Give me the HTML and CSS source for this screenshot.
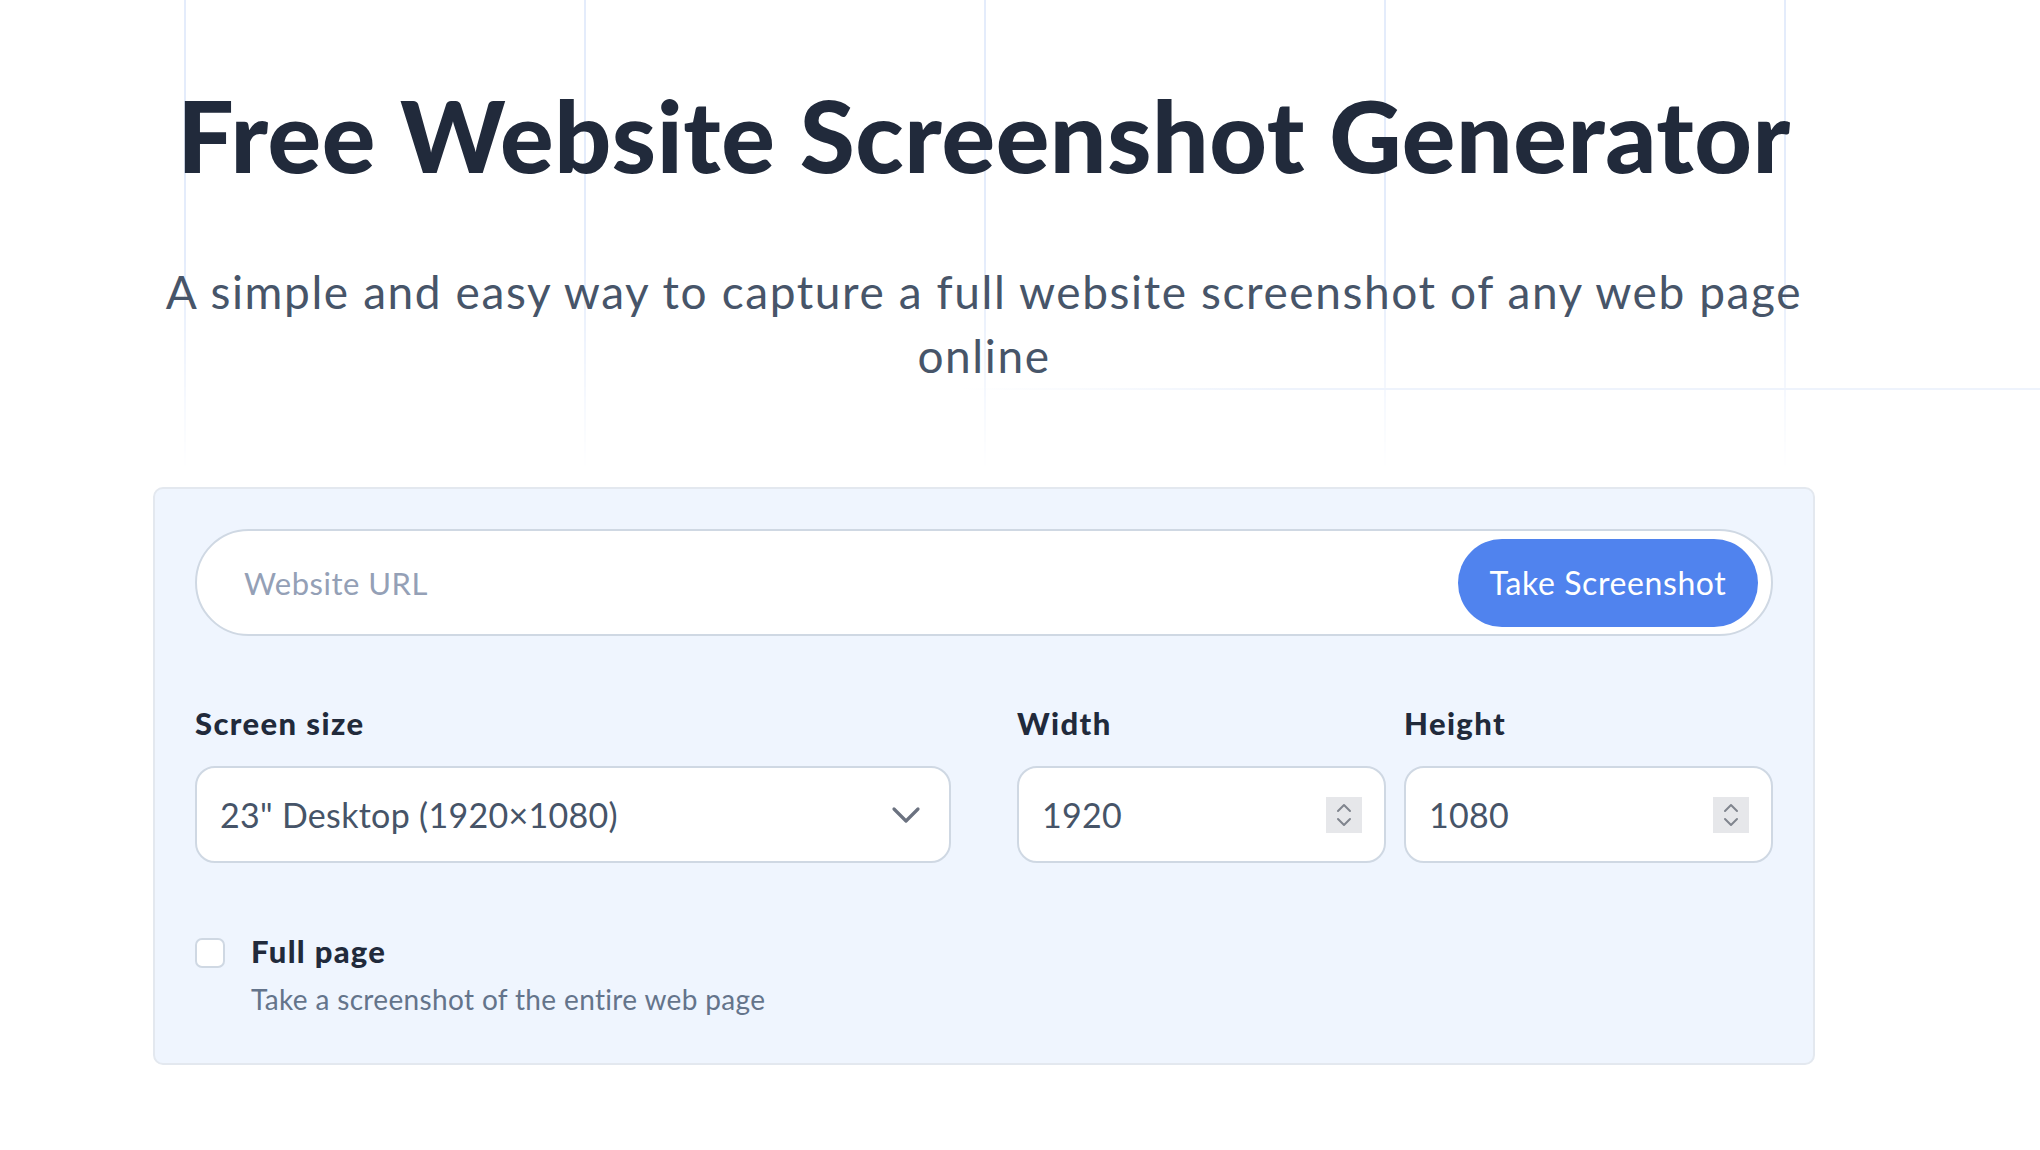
FILE: index.html
```html
<!DOCTYPE html>
<html lang="en">
<head>
<meta charset="utf-8">
<title>Free Website Screenshot Generator</title>
<link rel="stylesheet" href="styles.css">
</head>
<body>
<div class="bg-grid"></div>
<div class="bg-line"></div>
<main class="page">
  <h1 class="title">Free Website Screenshot Generator</h1>
  <p class="subtitle">A simple and easy way to capture a full website screenshot of any web page<br>online</p>

  <section class="card">
    <div class="url-bar">
      <input class="url-input" type="text" placeholder="Website URL">
      <button class="btn" type="button">Take Screenshot</button>
    </div>

    <div class="size-row">
      <div class="field field-select">
        <div class="label">Screen size</div>
        <div class="control select">
          <span class="value">23" Desktop (1920×1080)</span>
          <svg class="chevron" width="30" height="18" viewBox="0 0 30 18"><path d="M3 3 L15 15 L27 3" fill="none" stroke="#6b7280" stroke-width="3.2" stroke-linecap="round" stroke-linejoin="round"/></svg>
        </div>
      </div>
      <div class="field field-num">
        <div class="label">Width</div>
        <div class="control num">
          <span class="value">1920</span>
          <span class="spin"><svg width="36" height="36" viewBox="0 0 36 36"><path d="M12 14 L18 8 L24 14 M12 22 L18 28 L24 22" fill="none" stroke="#80858e" stroke-width="2" stroke-linecap="round" stroke-linejoin="round"/></svg></span>
        </div>
      </div>
      <div class="field field-num">
        <div class="label">Height</div>
        <div class="control num">
          <span class="value">1080</span>
          <span class="spin"><svg width="36" height="36" viewBox="0 0 36 36"><path d="M12 14 L18 8 L24 14 M12 22 L18 28 L24 22" fill="none" stroke="#80858e" stroke-width="2" stroke-linecap="round" stroke-linejoin="round"/></svg></span>
        </div>
      </div>
    </div>

    <div class="check-row">
      <span class="checkbox"></span>
      <div class="check-text">
        <div class="check-title">Full page</div>
        <div class="check-desc">Take a screenshot of the entire web page</div>
      </div>
    </div>
  </section>
</main>
</body>
</html>
```

FILE: styles.css
```css
html, body {
  margin: 0;
  padding: 0;
  background: #ffffff;
}

body {
  font-family: "Lato", "Noto Sans", "Liberation Sans", sans-serif;
  position: relative;
  min-height: 1150px;
  overflow: hidden;
}

.bg-grid {
  position: absolute;
  top: 0;
  left: 0;
  width: 100%;
  height: 470px;
  z-index: 0;
  background-image: linear-gradient(to right, #e4ecfb 2px, transparent 2px);
  background-size: 400px 400px;
  background-position: 184px 0;
  -webkit-mask-image: linear-gradient(to bottom, #000 55%, transparent 100%);
  mask-image: linear-gradient(to bottom, #000 55%, transparent 100%);
}

.bg-line {
  position: absolute;
  top: 388px;
  left: 960px;
  right: 0;
  height: 2px;
  z-index: 0;
  background: linear-gradient(to right, rgba(238, 243, 252, 0), #eef3fc 30%, #eef3fc);
}

.page {
  position: relative;
  z-index: 1;
  width: 1662px;
  margin-left: 153px;
  padding-top: 74px;
}

.title {
  margin: 0;
  text-align: center;
  font-size: 100px;
  line-height: 120px;
  font-weight: 900;
  color: #212a3b;
  letter-spacing: 0.6px;
}

.subtitle {
  margin: 66px 0 0;
  text-align: center;
  font-size: 46px;
  line-height: 64px;
  font-weight: 400;
  color: #475569;
  letter-spacing: 1.6px;
}

.card {
  margin-top: 99px;
  background: #eff5fe;
  border: 2px solid #e3e8ef;
  border-radius: 10px;
  padding: 40px 40px 46px;
}

.url-bar {
  display: flex;
  align-items: center;
  height: 107px;
  box-sizing: border-box;
  background: #ffffff;
  border: 2px solid #cfd8e3;
  border-radius: 999px;
  padding: 0 13px 0 47px;
}

.url-input {
  flex: 1;
  min-width: 0;
  border: none;
  outline: none;
  background: transparent;
  font-family: inherit;
  font-size: 31px;
  letter-spacing: 0.5px;
  color: #334155;
  padding: 0;
}

.url-input::placeholder {
  color: #94a0b6;
}

.btn {
  width: 300px;
  height: 88px;
  border: none;
  border-radius: 999px;
  background: #5083ee;
  color: #ffffff;
  font-family: inherit;
  font-size: 32px;
  font-weight: 400;
  letter-spacing: 0.6px;
  cursor: pointer;
}

.size-row {
  display: flex;
  margin-top: 67px;
}

.field-select {
  width: 756px;
  margin-right: 66px;
}

.field-num {
  width: 369px;
}

.field-num + .field-num {
  margin-left: 18px;
}

.label {
  font-size: 31px;
  line-height: 40px;
  font-weight: 900;
  color: #212a3b;
  letter-spacing: 1.4px;
  margin-bottom: 23px;
}

.control {
  display: flex;
  align-items: center;
  justify-content: space-between;
  height: 97px;
  box-sizing: border-box;
  background: #ffffff;
  border: 2px solid #cfd8e3;
  border-radius: 20px;
  padding: 0 22px 0 23px;
}

.select {
  padding-right: 28px;
}

.value {
  font-size: 34px;
  color: #465468;
  letter-spacing: 0.3px;
}

.chevron {
  display: block;
}

.spin {
  display: flex;
  width: 36px;
  height: 36px;
  background: #e6e7ea;
}

.spin svg {
  display: block;
}

.check-row {
  display: flex;
  align-items: flex-start;
  margin-top: 68px;
}

.checkbox {
  width: 30px;
  height: 30px;
  box-sizing: border-box;
  margin-top: 7px;
  background: #ffffff;
  border: 2px solid #cfd8e3;
  border-radius: 7px;
  flex: none;
}

.check-text {
  margin-left: 26px;
}

.check-title {
  font-size: 31px;
  line-height: 40px;
  font-weight: 900;
  color: #212a3b;
  letter-spacing: 1.3px;
}

.check-desc {
  margin-top: 10px;
  font-size: 28px;
  line-height: 36px;
  color: #64748b;
  letter-spacing: 0.35px;
}
```
